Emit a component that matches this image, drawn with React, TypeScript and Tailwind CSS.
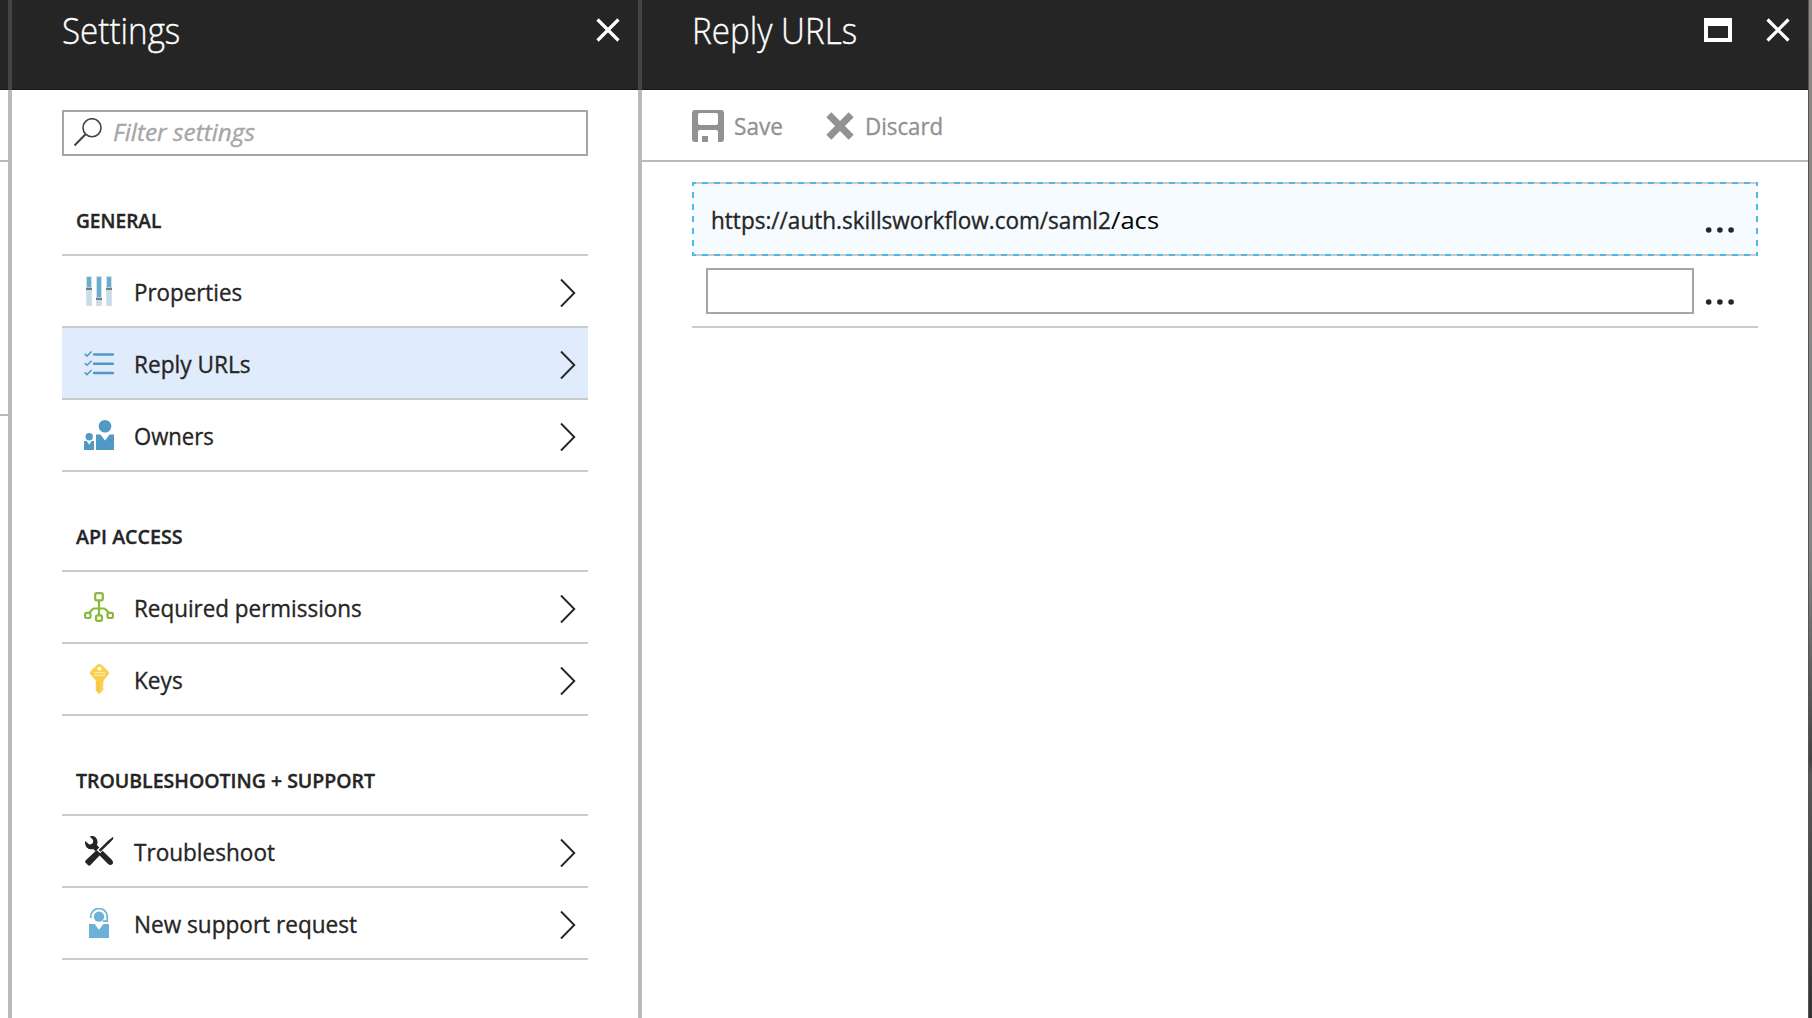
import { useLayoutEffect, useRef, type ReactNode } from "react";

/** Text condensed horizontally so that it takes up the given width. */
function Fit({ w, children, className = "" }: { w: number; children: ReactNode; className?: string }) {
  const ref = useRef<HTMLSpanElement>(null);
  useLayoutEffect(() => {
    const el = ref.current;
    if (el) el.style.transform = `scaleX(${w / el.offsetWidth})`;
  }, [w]);
  return (
    <span className="block whitespace-nowrap" style={{ width: w }}>
      <span ref={ref} className={`inline-block origin-left ${className}`}>
        {children}
      </span>
    </span>
  );
}

function PropertiesIcon() {
  const bars = [
    { x: 2, knob: 12 },
    { x: 12, knob: 22 },
    { x: 22, knob: 12 },
  ];
  return (
    <svg width="30" height="30" viewBox="0 0 30 30">
      {bars.map((b) => (
        <g key={b.x}>
          <rect x={b.x} y="0" width="6" height="30" fill="#dfdfdf" />
          <rect x={b.x + 1} y="1" width="4" height="28" fill="#bfdff0" />
          <rect x={b.x + 1} y="1" width="4" height={b.knob - 1} fill="#5fb1d6" />
          <rect x={b.x} y={b.knob - 1} width="6" height="1" fill="#c8c8c8" />
          <rect x={b.x} y={b.knob} width="6" height="2" fill="#7d7d7d" />
        </g>
      ))}
    </svg>
  );
}

function ChecklistIcon() {
  return (
    <svg width="30" height="30" viewBox="0 0 30 30" fill="none" stroke="#5199c5">
      {[6.5, 15.7, 25].map((y) => (
        <g key={y}>
          <path d={`M10 ${y}H29`} strokeWidth="2.4" strokeLinecap="round" />
          <path d={`M.8 ${y - 0.6}L3 ${y + 1.6}L7.6 ${y - 3}`} strokeWidth="1.5" />
        </g>
      ))}
    </svg>
  );
}

function OwnersIcon() {
  return (
    <svg width="30" height="30" viewBox="0 0 30 30" fill="#5199c5">
      <circle cx="21" cy="6.3" r="6.3" />
      <path d="M12 14.5H16.5L21 20.5L25.5 14.5H30V30H12Z" />
      <circle cx="5.2" cy="16.7" r="3.7" />
      <path d="M0 21H2.8L5.2 24.8L7.6 21H10V30H0Z" />
    </svg>
  );
}

function PermissionsIcon() {
  return (
    <svg width="30" height="30" viewBox="0 0 30 30" fill="none" stroke="#8ab83b" strokeWidth="2.2">
      <rect x="11.2" y="1.100" width="7.6" height="7.2" rx="1.6" />
      <rect x="12" y="23.4" width="6" height="5.500" rx="1.6" />
      <rect x="1.100" y="20.8" width="5.4" height="5.2" rx="1.4" />
      <rect x="23.500" y="20.8" width="5.4" height="5.2" rx="1.4" />
      <path d="M15 8.5V23M5.5 20.6L8.6 17.2Q9.2 16.5 10 16.5H20Q20.800 16.5 21.400 17.200L24.500 20.600" />
    </svg>
  );
}

function KeyIcon() {
  return (
    <svg width="30" height="30" viewBox="0 0 30 30">
      <path
        fillRule="evenodd"
        fill="#fad04a"
        d="M13.600 .5Q15.400 -.5 17.200 .5L24 7Q25.600 9 24.600 10.500L19.700 16.300V18L18.800 19L19.700 20L18.800 21.200L19.700 22.400L18.500 23.600L19.700 25L18.700 26.500L15.600 30H15L11.700 26.500V16.300L6.300 10.500Q5.400 8.700 6.800 7ZM15.400 2.700A2 2 0 1 0 15.410 2.700Z"
      />
      <path d="M10 8.700H21M10 11.300H21" stroke="#fde9a6" strokeWidth="1.200" />
      <path d="M14.300 17V28" stroke="#f2c03c" strokeWidth="1.400" />
    </svg>
  );
}

function ToolsIcon() {
  return (
    <svg width="30" height="30" viewBox="0 0 30 30">
      <path
        fill="#252525"
        d="M5.500 .6Q10.800 -1.200 13 3.600Q14.200 6.800 12.800 9L27.800 23.800Q30 26.500 28.300 28.200Q26.200 30 23.800 27.800L9.200 13Q5.500 14 2.700 11.400Q.4 8.600 1.200 4.900L5.200 8.600Q7.500 8.600 8.800 7Q9.600 5.400 8.800 3.600Z"
      />
      <path d="M28.500 2L9 20.800" stroke="#fff" strokeWidth="4.600" />
      <path fill="#252525" d="M29.200 .8V3L26 6.600L16.400 15.700L14.700 14L24.300 4.600Z" />
      <path fill="#252525" d="M12.700 14L17 18L6.300 29.200Q5 30.300 3.600 28.800L1.400 26.500Q.6 25.200 1.800 24.200Z" />
    </svg>
  );
}

function SupportIcon() {
  return (
    <svg width="30" height="30" viewBox="0 0 30 30" fill="#6cb1d6">
      <circle cx="15" cy="8.600" r="5.200" />
      <path d="M6.700 10V8.500A8.200 7.900 0 0 1 23.300 8.500V13.200H19" fill="none" stroke="#6cb1d6" strokeWidth="1.700" />
      <path d="M5 16H10.600L15 21.800L19.400 16H25V30H5Z" />
    </svg>
  );
}

function CloseIcon() {
  return (
    <svg width="24" height="24" viewBox="0 0 24 24" stroke="#fff" strokeWidth="3.200">
      <path d="M1.500 1.500L22.500 22.500M22.500 1.500L1.500 22.500" />
    </svg>
  );
}

function More() {
  return (
    <svg width="30" height="6" viewBox="0 0 30 6" fill="#252525">
      <circle cx="3.700" cy="3" r="2.800" />
      <circle cx="14.900" cy="3" r="2.800" />
      <circle cx="26.100" cy="3" r="2.800" />
    </svg>
  );
}

function Row({ icon, label, w, active = false }: { icon: ReactNode; label: string; w: number; active?: boolean }) {
  return (
    <li className={`flex h-[72px] items-center border-b-2 border-[#cbcbcb] pl-[22px] pr-3 ${active ? "bg-[#e0ebfc]" : ""}`}>
      {icon}
      <div className="ml-5 flex-1 pt-0.5 text-2xl leading-8">
        <Fit w={w - 1}>{label}</Fit>
      </div>
      <svg className="mt-1" width="16" height="30" viewBox="0 0 16 30" fill="none" stroke="#252525" strokeWidth="1.900">
        <path d="M1 1.500L14.300 15L1 28.500" />
      </svg>
    </li>
  );
}

function Group({ title, w, children }: { title: string; w: number; children: ReactNode }) {
  return (
    <section>
      <h2 className="flex h-[100px] items-end border-b-2 border-[#cbcbcb] pb-[19px] pl-3.5 text-xl leading-7 font-semibold">
        <Fit w={w}>{title}</Fit>
      </h2>
      <ul>{children}</ul>
    </section>
  );
}

function Divider() {
  return (
    <div className="flex w-1 shrink-0 flex-col">
      <div className="h-[90px] bg-[#444444]" />
      <div className="flex-1 bg-[#bababa]" />
    </div>
  );
}

/** Dashed frame that marks the hovered row, drawn over the row's own rules. */
function DashedFrame() {
  return (
    <>
      <div className="absolute inset-x-0 -top-0.5 h-0.5 bg-[repeating-linear-gradient(90deg,#4db8ec_0_6px,transparent_6px_11.978px)] bg-[position:-2px_0] bg-[size:1078px_2px]" />
      <div className="absolute inset-x-0 -bottom-0.5 h-0.5 bg-[repeating-linear-gradient(90deg,#4db8ec_0_6px,transparent_6px_11.978px)] bg-[position:-2px_0] bg-[size:1078px_2px]" />
      <div className="absolute -inset-y-0.5 left-0 w-0.5 bg-[repeating-linear-gradient(180deg,#4db8ec_0_6px,transparent_6px_12px)] bg-[position:0_-2px] bg-[size:2px_84px]" />
      <div className="absolute -inset-y-0.5 right-0 w-0.5 bg-[repeating-linear-gradient(180deg,#4db8ec_0_6px,transparent_6px_12px)] bg-[position:0_-2px] bg-[size:2px_84px]" />
    </>
  );
}

export default function App() {
  return (
    <div className="flex h-[1018px] w-[1812px] overflow-hidden bg-white font-['Open_Sans','Noto_Sans',sans-serif] text-[#252525] [-webkit-text-stroke:0.35px_currentColor]">
      <div className="w-2 shrink-0">
        <div className="h-[90px] border-b border-[#1a1718] bg-[#252525]" />
        <div className="h-[72px] border-b-2 border-[#bababa]" />
        <div className="h-[254px] border-b-2 border-[#bababa]" />
      </div>
      <Divider />

      <div className="w-[626px] shrink-0">
        <header className="flex h-[90px] items-start justify-between border-b border-[#1a1718] bg-[#252525] pr-[18px] pl-[50px] text-white">
          <h1 className="pt-[7px] text-4xl leading-[48px] font-light">
            <Fit w={118}>Settings</Fit>
          </h1>
          <button className="mt-[18px]">
            <CloseIcon />
          </button>
        </header>
        <div className="px-[50px] pt-5">
          <div className="flex h-[46px] items-center border-2 border-[#a6a6a6] pl-2.5">
            <svg width="30" height="30" viewBox="0 0 30 30" fill="none" stroke="#444" strokeWidth="1.600">
              <circle cx="18" cy="9.700" r="9" />
              <path d="M11.500 16.200L.5 27.500" strokeWidth="2" />
            </svg>
            <div className="-mt-0.5 ml-[9px] text-2xl leading-8 text-[#a6a6a6] italic">
              <Fit w={142}>Filter settings</Fit>
            </div>
          </div>
          <Group title="GENERAL" w={85}>
            <Row icon={<PropertiesIcon />} label="Properties" w={109} />
            <Row icon={<ChecklistIcon />} label="Reply URLs" w={118} active />
            <Row icon={<OwnersIcon />} label="Owners" w={81} />
          </Group>
          <Group title="API ACCESS" w={107}>
            <Row icon={<PermissionsIcon />} label="Required permissions" w={229} />
            <Row icon={<KeyIcon />} label="Keys" w={50} />
          </Group>
          <Group title="TROUBLESHOOTING + SUPPORT" w={299}>
            <Row icon={<ToolsIcon />} label="Troubleshoot" w={142} />
            <Row icon={<SupportIcon />} label="New support request" w={224} />
          </Group>
        </div>
      </div>
      <Divider />

      <div className="flex-1">
        <header className="flex h-[90px] items-start border-b border-[#1a1718] bg-[#252525] pr-[18px] pl-[50px] text-white">
          <h1 className="flex-1 pt-[7px] text-4xl leading-[48px] font-light">
            <Fit w={165}>Reply URLs</Fit>
          </h1>
          <button className="mt-[18px] h-6 w-7 border-4 border-t-8 border-white" />
          <button className="mt-[18px] ml-[34px]">
            <CloseIcon />
          </button>
        </header>

        <div className="flex h-[72px] items-center border-b-2 border-[#bababa] pl-[50px] text-2xl leading-8 text-[#929292]">
          <svg className="mt-0.5" width="32" height="32" viewBox="0 0 32 32" fill="#929292">
            <path
              fillRule="evenodd"
              d="M3 0H29Q32 0 32 3V29Q32 32 29 32H26V22Q26 20 24 20H8Q6 20 6 22V32H3Q0 32 0 29V3Q0 0 3 0ZM8 3Q6 3 6 5V13Q6 15 8 15H24Q26 15 26 13V5Q26 3 24 3Z"
            />
            <rect x="10" y="26" width="6" height="6" />
          </svg>
          <div className="ml-2.5 pt-0.5">
            <Fit w={49}>Save</Fit>
          </div>
          <svg className="mt-0.5 ml-[43px]" width="28" height="28" viewBox="0 0 28 28" stroke="#929292" strokeWidth="7">
            <path d="M2.800 2.800L25.200 25.200M25.200 2.800L2.800 25.200" />
          </svg>
          <div className="ml-[11px] pt-0.5">
            <Fit w={78}>Discard</Fit>
          </div>
        </div>

        <div className="pt-5 pr-[50px] pl-[50px]">
          <div className="relative flex h-[74px] items-center justify-between border-y-2 border-[#cbcbcb] bg-[#f5fbff] pr-[23px] pl-[19px]">
            <DashedFrame />
            <div className="flex pt-px text-2xl leading-8">
              <Fit w={400}>https://auth.skillsworkflow.com/saml2</Fit>
              <Fit w={48} className="text-black [-webkit-text-stroke-width:0px]">
                /acs
              </Fit>
            </div>
            <div className="mt-[22px] flex">
              <More />
            </div>
          </div>
          <div className="flex h-[72px] justify-between border-b-2 border-[#cbcbcb] pt-3 pr-[23px] pl-3.5">
            <input className="h-[46px] w-[988px] border-2 border-[#a6a6a6] outline-none" />
            <div className="mt-[31px]">
              <More />
            </div>
          </div>
        </div>
      </div>
      <div className="w-1 shrink-0 border-l border-[#555] bg-[linear-gradient(180deg,#8b8987_0,#868686_540px,#808080_570px,#444_760px,#585858_775px,#333_1018px)]" />
    </div>
  );
}
